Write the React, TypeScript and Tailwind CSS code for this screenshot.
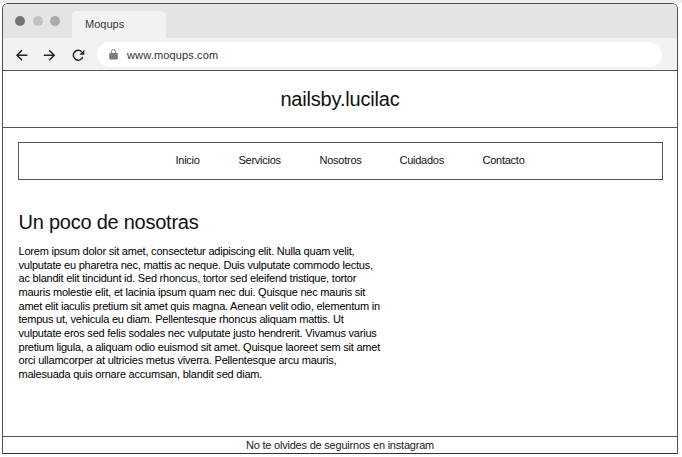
const lines = [
  'Lorem ipsum dolor sit amet, consectetur adipiscing elit. Nulla quam velit,',
  'vulputate eu pharetra nec, mattis ac neque. Duis vulputate commodo lectus,',
  'ac blandit elit tincidunt id. Sed rhoncus, tortor sed eleifend tristique, tortor',
  'mauris molestie elit, et lacinia ipsum quam nec dui. Quisque nec mauris sit',
  'amet elit iaculis pretium sit amet quis magna. Aenean velit odio, elementum in',
  'tempus ut, vehicula eu diam. Pellentesque rhoncus aliquam mattis. Ut',
  'vulputate eros sed felis sodales nec vulputate justo hendrerit. Vivamus varius',
  'pretium ligula, a aliquam odio euismod sit amet. Quisque laoreet sem sit amet',
  'orci ullamcorper at ultricies metus viverra. Pellentesque arcu mauris,',
  'malesuada quis ornare accumsan, blandit sed diam.',
];

function BrowserBar() {
  return (
    <div className="h-[66px] shrink-0 bg-[#f2f2f2]">
      <div className="flex h-[34px] items-end bg-[#e4e4e4] pl-3">
        <div className="flex gap-[7.5px] pb-[12px]">
          <span className="size-2.5 rounded-full bg-[#747474]" />
          <span className="size-2.5 rounded-full bg-[#c3c3c3]" />
          <span className="size-2.5 rounded-full bg-[#aaaaaa]" />
        </div>
        <div className="ml-3 h-[27px] w-[94px] rounded-t-[5px] bg-[#f2f2f2] pl-[13px] text-[11px] leading-[27px] text-[#383838]">
          Moqups
        </div>
      </div>
      <div className="flex h-[32px] items-center pl-[12px]">
        <svg className="mt-[2px] h-[14px] w-[72px] shrink-0" viewBox="0 0 72 14" fill="none" stroke="#252525" strokeWidth="1.5">
          <path d="M12.4 7.3H2.1M7 2.3l-5 5 5 5M28.8 7.3h10.3M34.2 2.3l5 5-5 5" />
          <path d="M66.8 3.9A4.9 4.9 0 1 0 67.8 9" />
          <path d="M69.3 1.8v5h-5Z" fill="#252525" stroke="none" />
        </svg>
        <div className="ml-[10px] flex h-[25px] w-[565px] items-center rounded-full bg-white pl-3">
          <svg className="h-[11px] w-[9px]" viewBox="0 0 9 11">
            <path fill="#7d7d7d" d="M1 4h7a.8.8 0 0 1 .8.8v5a.8.8 0 0 1-.8.8H1a.8.8 0 0 1-.8-.8v-5A.8.8 0 0 1 1 4Z" />
            <path fill="none" stroke="#858585" d="M2.4 4V2.6a2.1 2.1 0 0 1 4.2 0V4" />
          </svg>
          <span className="ml-[9px] pt-[2px] text-[11px] leading-[14px] tracking-[0.15px] text-[#303030]">www.moqups.com</span>
        </div>
      </div>
    </div>
  );
}

export default function App() {
  return (
    <div className="h-[457px] w-[682px] overflow-hidden border-t-[3px] border-[#eeeeee] bg-white pl-[2px] font-['Liberation_Sans',Arial,sans-serif] text-black">
      <main className="flex h-[451px] w-[676px] flex-col overflow-hidden rounded-t-[6px] border border-[#505050] border-b-[#333]">
        <BrowserBar />
        <header className="h-[58px] shrink-0 border-y border-[#555] pt-[15px] text-center text-[20px] leading-[26px] tracking-[-0.18px] text-[#111]">
          nailsby.lucilac
        </header>
        <nav className="ml-[15px] mr-[14px] mt-[14px] flex h-[38px] shrink-0 border border-[#555] pl-[156.5px] pt-[10px] text-[11px] leading-[14px] tracking-[-0.25px] text-[#111]">
          <span className="w-[63px]">Inicio</span>
          <span className="w-[81px]">Servicios</span>
          <span className="w-[80px]">Nosotros</span>
          <span className="w-[83px]">Cuidados</span>
          <span>Contacto</span>
        </nav>
        <section className="flex-1 pl-[15.5px]">
          <h1 className="mt-[29px] text-[20px] leading-[26px] tracking-[-0.24px] text-[#111]">Un poco de nosotras</h1>
          <p className="mt-[10px] whitespace-nowrap text-[11px] leading-[13.67px] tracking-[-0.22px]">
            {lines.map((line) => (
              <span key={line} className="block">{line}</span>
            ))}
          </p>
        </section>
        <footer className="h-[17px] shrink-0 border-t border-[#555] text-center text-[11px] leading-[16px] tracking-[-0.21px] text-[#222]">
          No te olvides de seguirnos en instagram
        </footer>
      </main>
    </div>
  );
}
